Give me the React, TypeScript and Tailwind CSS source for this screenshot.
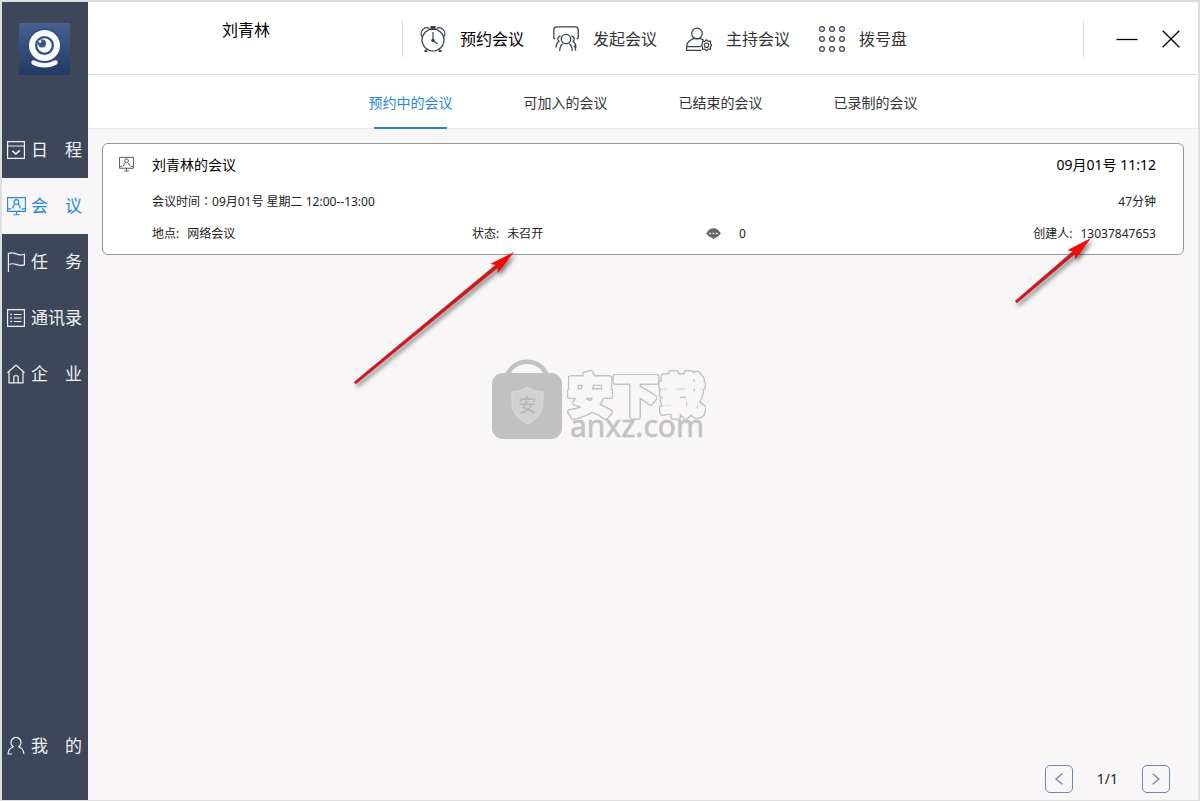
import React, { useState } from 'react';

const CalendarIcon = () => (
  <svg className="w-[18px] h-5 shrink-0" viewBox="0 0 18 20" fill="none" stroke="currentColor" strokeWidth="1.2">
    <path d="M.6 1.6h16.8v16.8H.6zM.6 6h16.8" />
    <path d="M5.4 10.8l3.4 3.2 4-3.6" strokeWidth="1.6" />
  </svg>
);

const MeetingIcon = ({ className = 'w-[19px] h-5' }: { className?: string }) => (
  <svg className={`${className} shrink-0`} viewBox="0 0 19 20" fill="none" stroke="currentColor" strokeWidth="1.1">
    <path d="M.6 1.6h17.8v13.8H.6zM.6 12.9h3.6M14.8 12.9h3.6M9.5 15.4v3M6.5 18.8h6" />
    <circle cx="9.5" cy="6" r="2.4" />
    <path d="M5.8 12.6c0-2 .9-3.7 2.3-4.6M13.2 12.6c0-2-.9-3.7-2.3-4.6" />
  </svg>
);

const FlagIcon = () => (
  <svg className="w-[18px] h-5 shrink-0" viewBox="0 0 18 20" fill="none" stroke="currentColor" strokeWidth="1.2">
    <path d="M1.4 20V.8M1.4 1.6c3-1.2 5-.8 7.8.3 2.8 1.1 5 1.4 8.2.4v10.6c-3 1-5.4.6-8.2-.5-2.8-1-4.8-1-7.8 0" />
  </svg>
);

const ListIcon = () => (
  <svg className="w-[18px] h-5 shrink-0" viewBox="0 0 18 20" fill="none" stroke="currentColor" strokeWidth="1.2">
    <path d="M.6 1.6h16.8v16.8H.6zM6.8 6.5h7.7M6.8 10h7.7M6.8 13.5h7.7" />
    <path d="M3.4 6.5h1.6M3.4 10h1.6M3.4 13.5h1.6" strokeWidth="1.6" />
  </svg>
);

const HomeIcon = () => (
  <svg className="w-[18px] h-5 shrink-0" viewBox="0 0 18 20" fill="none" stroke="currentColor" strokeWidth="1.2">
    <path d="M.5 8.8L9 1l8.5 7.8M2 7.8v11h14v-11M6.8 18.8v-5.3c0-2.6 4.4-2.6 4.4 0v5.3" />
  </svg>
);

const UserIcon = () => (
  <svg className="w-[18px] h-5 shrink-0" viewBox="0 0 18 20" fill="none" stroke="currentColor" strokeWidth="1.2">
    <path d="M6.5 10.8a5 5 0 1 1 5 0" />
    <path d="M5 18H1c.2-3.5 2.4-6.2 5.5-7.2M11.5 10.8c3 .9 5.1 3.7 5.5 7.2" />
  </svg>
);

const ClockIcon = () => (
  <svg className="w-[26px] h-[26px] shrink-0" viewBox="0 0 26 26" fill="none" stroke="#3c4350" strokeWidth="1.2">
    <circle cx="13" cy="14" r="11" />
    <path d="M1.9 10.5C-.8 6 4.5-.8 9.5 2.6M24.1 10.5C26.8 6 21.5-.8 16.5 2.6M13 6v9M13 14.5l4.5 3.5M7 23.4l-2.5 1.9M19 23.4l2.5 1.9M4.3 25.3h3M18.7 25.3h3" />
    <path d="M11 .5h4v2.8h-4z" fill="#3c4350" />
    <circle cx="13" cy="14.5" r="1.2" fill="#3c4350" />
  </svg>
);

const GroupIcon = () => (
  <svg className="w-[26px] h-[26px] shrink-0" viewBox="0 0 26 26" fill="none" stroke="#3c4350" strokeWidth="1.3">
    <path d="M.8 12.5V3.5C.8 1.8 1.8.8 3.5.8h19c1.7 0 2.7 1 2.7 2.7v9M.8 12.5h1.6M25.2 12.5h-1.6" />
    <circle cx="13" cy="13" r="4.7" />
    <path d="M7.5 10c-3 .5-3.5 3.7-1.6 5.2-1.7 1.2-2.7 3.3-3 6.3M18.5 10c3 .5 3.5 3.7 1.6 5.2 1.7 1.2 2.7 3.3 3 6.3M9.7 17.8c-2 1.5-2.9 4-3 7.2M16.3 17.8c2 1.5 2.9 4 3 7.2M21 19.5c1 1.5 1.6 3 1.7 5.3" />
  </svg>
);

const HostIcon = () => (
  <svg className="w-[26px] h-[26px] shrink-0" viewBox="0 0 26 26" fill="none" stroke="#3c4350" strokeWidth="1.2">
    <circle cx="11" cy="7.5" r="5.3" />
    <path d="M15.5 24.3H.6v-3.6C.6 16.7 4 14 7.5 12.6h7c1.3.5 2.4 1 3.3 1.7M.6 20.7h14.2" />
    <path d="M20.5 13.8l1.7 1.6 2.3-.2v2.3l1.2 1.7-1.2 1.7v2.3l-2.3-.1-1.7 1.6-1.7-1.6-2.3.1v-2.3l-1.2-1.7 1.2-1.7v-2.3l2.3.2z" />
    <circle cx="20.5" cy="19.2" r="2.2" />
  </svg>
);

const DialIcon = () => (
  <svg className="w-[26px] h-[26px] shrink-0" viewBox="0 0 26 26" fill="none" stroke="#3c4350" strokeWidth="1.2">
    {[3, 13, 23].map((cy) => [3, 13, 23].map((cx) => <circle key={`${cx}-${cy}`} cx={cx} cy={cy} r="2.4" />))}
  </svg>
);

const Logo = () => (
  <svg className="w-[51px] h-[52px]" viewBox="0 0 51 52">
    <defs>
      <linearGradient id="logoBg" x1="0" y1="0" x2="0" y2="1">
        <stop offset="0" stopColor="#466092" />
        <stop offset="1" stopColor="#213a64" />
      </linearGradient>
    </defs>
    <rect width="51" height="52" rx="1" fill="url(#logoBg)" />
    <path d="M14.5 39.5c6 3.5 16 3.5 22 0" stroke="#f7fbff" strokeWidth="4.5" fill="none" strokeLinecap="round" />
    <circle cx="25.5" cy="22.5" r="17" fill="#2f4a7a" />
    <circle cx="25.5" cy="22.5" r="12.5" stroke="#f7fbff" strokeWidth="6" fill="#35507d" />
    <circle cx="25.5" cy="22.5" r="7.2" fill="#f7fbff" />
    <circle cx="23" cy="20.5" r="4" fill="#3a5583" />
    <circle cx="21" cy="18.5" r="1.4" fill="#f7fbff" />
  </svg>
);

const Watermark = () => (
  <svg className="mr-1 h-24 w-[216px]" viewBox="0 -6 216 96">
    <path d="M17 17C23-2 51-2 57 17" stroke="#c1c1c1" strokeWidth="4.5" fill="none" />
    <rect x="2" y="14" width="70" height="66" rx="11" fill="#c1c1c1" />
    <path d="M37.5 28c5 3.5 10 4.5 15.5 4.5v12c0 10-7 16-15.5 20.5C29 60.5 22 54.5 22 44.5v-12c5.5 0 10.5-1 15.5-4.5z" fill="#d2d2d2" stroke="#dadada" />
    <text x="37.5" y="53" fontSize="18" fontWeight="500" textAnchor="middle" fill="#b8b8b8">安</text>
    {/* rounded light letters, the stacked shadows give them their grey rim */}
    <text
      x="77"
      y="53"
      fontSize="46"
      fontWeight="700"
      fill="#f8f6f7"
      stroke="#f8f6f7"
      strokeWidth="3"
      strokeLinejoin="round"
      className="[filter:drop-shadow(1px_0_0_#c1c1c1)_drop-shadow(-1px_0_0_#c1c1c1)_drop-shadow(0_1px_0_#c1c1c1)_drop-shadow(0_-1px_0_#c1c1c1)]"
    >
      安下载
    </text>
    <text x="80" y="78" fontSize="30" fill="#c1c1c1" stroke="#c1c1c1" strokeWidth=".5">anxz.com</text>
  </svg>
);

const navItems = [
  { label: '日　程', icon: CalendarIcon },
  { label: '会　议', icon: MeetingIcon },
  { label: '任　务', icon: FlagIcon },
  { label: '通讯录', icon: ListIcon },
  { label: '企　业', icon: HomeIcon },
];

const actions = [
  { label: '预约会议', icon: ClockIcon, color: 'text-black' },
  { label: '发起会议', icon: GroupIcon, color: 'text-[#333]' },
  { label: '主持会议', icon: HostIcon, color: 'text-[#333]' },
  { label: '拨号盘', icon: DialIcon, color: 'text-[#333]' },
];

const tabs = ['预约中的会议', '可加入的会议', '已结束的会议', '已录制的会议'];

const App: React.FC = () => {
  const [nav, setNav] = useState(1);
  const [tab, setTab] = useState(0);

  return (
    <div className="relative flex h-screen overflow-hidden border-2 border-b border-[#dedede] bg-[#f8f6f7] font-['Noto_Sans','Noto_Sans_CJK_SC',sans-serif] text-[#222]">
      {/* Sidebar */}
      <aside className="flex w-[86px] shrink-0 flex-col bg-[#3e4759] pb-[26px] text-[17px] leading-6 text-[#f0f2f5]">
        <div className="flex h-[120px] pl-[17px] pt-[21px]">
          <Logo />
        </div>
        <nav>
          {navItems.map((item, i) => (
            <a
              key={item.label}
              href="#"
              onClick={() => setNav(i)}
              className={`flex h-14 items-center whitespace-nowrap pl-[5px] ${nav === i ? 'bg-[#f8f6f7] text-[#2488dc]' : ''}`}
            >
              <span className="w-6 shrink-0">
                <item.icon />
              </span>
              {item.label}
            </a>
          ))}
        </nav>
        <a href="#" className="mt-auto flex h-14 items-center whitespace-nowrap pl-[5px]">
          <span className="w-6 shrink-0">
            <UserIcon />
          </span>
          我　的
        </a>
      </aside>

      <main className="flex min-w-0 flex-1 flex-col">
        {/* Header */}
        <header className="flex h-[73px] shrink-0 items-center border-b border-[#dcdcdc] bg-white pt-0.5 text-base leading-6">
          <div className="w-[314px] self-start pl-0.5 pt-3.5 text-center text-black">刘青林</div>
          <div className="flex h-9 flex-1 items-center gap-[29px] border-x border-[#dcdcdc] pl-[17px]">
            {actions.map((action) => (
              <button key={action.label} className={`flex items-center gap-3.5 whitespace-nowrap ${action.color}`}>
                <action.icon />
                {action.label}
              </button>
            ))}
          </div>
          <div className="flex w-[114px] items-center justify-end gap-6 pr-[18px]">
            <button aria-label="最小化">
              <svg className="h-5 w-[22px]" viewBox="0 0 22 20" stroke="#000" strokeWidth="1.3">
                <path d="M.5 10.5h21" />
              </svg>
            </button>
            <button aria-label="关闭">
              <svg className="h-5 w-[18px]" viewBox="0 0 18 20" stroke="#000" strokeWidth="1.3">
                <path d="M.7 1.7l16.6 16.6M17.3 1.7L.7 18.3" />
              </svg>
            </button>
          </div>
        </header>

        {/* Tabs */}
        <div className="flex h-[54px] shrink-0 justify-center gap-[60px] border-b border-[#ebebeb] bg-white text-sm">
          {tabs.map((label, i) => (
            <button
              key={label}
              onClick={() => setTab(i)}
              className={`relative w-[95px] whitespace-nowrap pt-0.5 ${tab === i ? 'text-[#2488dc]' : 'text-[#333]'}`}
            >
              {label}
              {tab === i && <span className="absolute inset-x-[11px] -bottom-px h-0.5 bg-[#2a86b4]" />}
            </button>
          ))}
        </div>

        {/* Meeting list */}
        <section className="flex-1 px-3.5 pt-3.5">
          <article className="flex gap-[18px] rounded-md border border-[#969696] bg-white pb-2.5 pl-4 pr-[27px] pt-[9px]">
            <MeetingIcon className="mt-[3px] h-4 w-[15px] text-[#444]" />
            <div className="flex-1 text-xs leading-5">
              <div className="flex justify-between text-sm leading-6 text-black">
                <h2>刘青林的会议</h2>
                <time>09月01号 11:12</time>
              </div>
              <div className="mt-[15px] flex justify-between">
                <span>
                  会议时间<span className="font-['Noto_Sans_CJK_TC',sans-serif] leading-none" lang="zh-TW">：</span>09月01号 星期二 12:00--13:00
                </span>
                <span>47分钟</span>
              </div>
              <div className="mt-3 grid grid-cols-[320fr_234fr_450fr]">
                <div className="flex gap-2">
                  <span>地点:</span>
                  <span>网络会议</span>
                </div>
                <div className="relative flex gap-2">
                  <span>状态:</span>
                  <span>未召开</span>
                  <Arrow className="left-[-118px] top-[26px] h-[144px] w-[168px]" tail={[1, 133]} head={[160, 2]} />
                </div>
                <div className="relative flex items-center justify-between">
                  <div className="flex items-center gap-[18px]">
                    <svg className="h-3 w-[15px]" viewBox="0 0 15 12">
                      <path d="M3.5 1.5C6-.1 9-.1 11.5 1.5 13 2.5 13.5 4 15 5.5c-1.5 1-2 2.3-3.5 3.2-1 .6-2 .8-2.5.9l-1.5 1.9L6 9.6c-.8-.1-1.7-.3-2.5-.9C2 7.8 1.5 6.5 0 5.5 1.5 4 2 2.5 3.5 1.5z" fill="#666" />
                      <path d="M3.5 5.5H5M6.7 5.5h1.6M10 5.5h1.5" stroke="#fff" strokeWidth="1.4" />
                    </svg>
                    <span>0</span>
                  </div>
                  <div className="flex gap-2">
                    <span>创建人:</span>
                    <span>13037847653</span>
                  </div>
                  <Arrow className="right-[58px] top-[12px] h-[76px] w-[86px]" tail={[4, 66]} head={[79, 2]} />
                </div>
              </div>
            </div>
          </article>
        </section>

        {/* Pagination */}
        <footer className="flex items-center justify-end gap-6 pb-[7px] pr-7 text-sm">
          <button aria-label="上一页" className="flex h-7 w-7 items-center justify-center rounded-[5px] border border-[#7685ad] text-[#7685ad]">
            <svg className="h-3 w-2" viewBox="0 0 8 12" fill="none" stroke="currentColor" strokeWidth="1.4">
              <path d="M7.3.7L1 6l6.3 5.3" />
            </svg>
          </button>
          <span>1/1</span>
          <button aria-label="下一页" className="flex h-7 w-7 items-center justify-center rounded-[5px] border border-[#7685ad] text-[#7685ad]">
            <svg className="h-3 w-2" viewBox="0 0 8 12" fill="none" stroke="currentColor" strokeWidth="1.4">
              <path d="M.7.7L7 6 .7 11.3" />
            </svg>
          </button>
        </footer>
      </main>

      <div className="pointer-events-none absolute inset-0 flex items-center justify-center">
        <Watermark />
      </div>
    </div>
  );
};

type Point = [number, number];

// Red pointer drawn from tail to head, the tip sits exactly on head
function Arrow({ className, tail, head }: { className: string; tail: Point; head: Point }) {
  const dx = head[0] - tail[0];
  const dy = head[1] - tail[1];
  const len = Math.hypot(dx, dy);
  const [ux, uy] = [dx / len, dy / len];
  const at = (back: number, side: number) => `${head[0] - ux * back - uy * side},${head[1] - uy * back + ux * side}`;

  return (
    <svg className={`pointer-events-none absolute overflow-visible drop-shadow-[2px_3px_2px_rgba(0,0,0,0.5)] ${className}`}>
      <polygon points={[at(len, 1.2), at(len, -1.2), at(18, -1.7), at(18, 1.7)].join(' ')} fill="#c8191e" stroke="#c8191e" strokeWidth=".6" />
      <polygon points={[at(0, 0), at(26, 6), at(21, 0), at(26, -6)].join(' ')} fill="#fb0505" />
    </svg>
  );
}

export default App;
